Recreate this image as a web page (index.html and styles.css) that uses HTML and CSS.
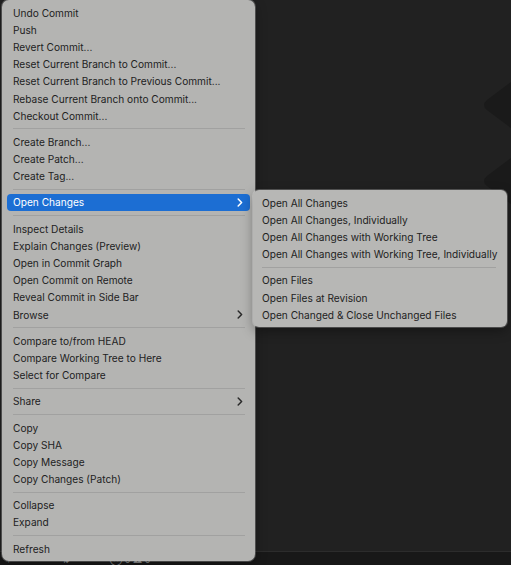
FILE: index.html
```html
<!DOCTYPE html>
<html>
<head>
<meta charset="utf-8">
<link rel="stylesheet" href="styles.css">
</head>
<body>
<div class="editor">
  <svg class="deco" width="30" height="140" viewBox="0 0 30 140">
    <path d="M30 12 L6 30 Q0 35 6 40 L30 58 Z" fill="#1a1a1a"/>
    <path d="M30 88 L6 106 Q0 111 6 116 L30 134 Z" fill="#1a1a1a"/>
  </svg>
  <div class="status">
    <span class="st">⑂ ⁰⁰</span><span class="st">⇅</span><span class="st">⊗ 0 ⚠ 0</span>
  </div>
</div>

<div class="menu main">
  <div class="item">Undo Commit</div>
  <div class="item">Push</div>
  <div class="item">Revert Commit...</div>
  <div class="item">Reset Current Branch to Commit...</div>
  <div class="item">Reset Current Branch to Previous Commit...</div>
  <div class="item">Rebase Current Branch onto Commit...</div>
  <div class="item">Checkout Commit...</div>
  <div class="sep"></div>
  <div class="item">Create Branch...</div>
  <div class="item">Create Patch...</div>
  <div class="item">Create Tag...</div>
  <div class="sep"></div>
  <div class="item active"><span>Open Changes</span><svg class="chev" width="6" height="9" viewBox="0 0 6 9"><path d="M1.2 1 L4.6 4.5 L1.2 8" fill="none" stroke="currentColor" stroke-width="1.5" stroke-linecap="round" stroke-linejoin="round"/></svg></div>
  <div class="sep"></div>
  <div class="item">Inspect Details</div>
  <div class="item">Explain Changes (Preview)</div>
  <div class="item">Open in Commit Graph</div>
  <div class="item">Open Commit on Remote</div>
  <div class="item">Reveal Commit in Side Bar</div>
  <div class="item"><span>Browse</span><svg class="chev" width="6" height="9" viewBox="0 0 6 9"><path d="M1.2 1 L4.6 4.5 L1.2 8" fill="none" stroke="currentColor" stroke-width="1.5" stroke-linecap="round" stroke-linejoin="round"/></svg></div>
  <div class="sep"></div>
  <div class="item">Compare to/from HEAD</div>
  <div class="item">Compare Working Tree to Here</div>
  <div class="item">Select for Compare</div>
  <div class="sep"></div>
  <div class="item"><span>Share</span><svg class="chev" width="6" height="9" viewBox="0 0 6 9"><path d="M1.2 1 L4.6 4.5 L1.2 8" fill="none" stroke="currentColor" stroke-width="1.5" stroke-linecap="round" stroke-linejoin="round"/></svg></div>
  <div class="sep"></div>
  <div class="item">Copy</div>
  <div class="item">Copy SHA</div>
  <div class="item">Copy Message</div>
  <div class="item">Copy Changes (Patch)</div>
  <div class="sep"></div>
  <div class="item">Collapse</div>
  <div class="item">Expand</div>
  <div class="sep"></div>
  <div class="item">Refresh</div>
</div>

<div class="menu sub">
  <div class="item">Open All Changes</div>
  <div class="item">Open All Changes, Individually</div>
  <div class="item">Open All Changes with Working Tree</div>
  <div class="item">Open All Changes with Working Tree, Individually</div>
  <div class="sep"></div>
  <div class="item">Open Files</div>
  <div class="item">Open Files at Revision</div>
  <div class="item">Open Changed &amp; Close Unchanged Files</div>
</div>
</body>
</html>
```

FILE: styles.css
```css
html, body {
  margin: 0;
  padding: 0;
  width: 511px;
  height: 565px;
  overflow: hidden;
  background: #212121;
  font-family: Inter, "Noto Sans", sans-serif;
}

.editor {
  position: relative;
  width: 511px;
  height: 565px;
  display: flex;
  flex-direction: column;
  justify-content: flex-end;
}

.deco {
  position: absolute;
  right: 0;
  top: 70px;
}

.status {
  height: 13px;
  border-top: 1px solid #2c2c2c;
  background: #181818;
  display: flex;
  gap: 40px;
  padding-left: 6px;
  align-items: flex-end;
  font-size: 9px;
  color: #8a8a8a;
  line-height: 10px;
}

.menu {
  position: absolute;
  background: #b4b4b2;
  color: #222222;
  font-size: 10.15px;
  box-shadow: 0 0 0 1px rgba(255, 255, 255, 0.22), 0 4px 12px rgba(0, 0, 0, 0.35);
  box-sizing: border-box;
}

.main {
  left: 2px;
  top: 0;
  width: 253px;
  padding: 4px 0 4px;
  border-radius: 7px;
}

.sub {
  left: 253px;
  top: 190px;
  width: 254px;
  padding: 4px 0 4px;
  border-radius: 6px;
  background: #b7b7b5;
}

.item {
  height: 17.2px;
  display: flex;
  align-items: center;
  justify-content: space-between;
  margin: 0 5px;
  padding: 0 7px 0 6px;
  border-radius: 4px;
  white-space: nowrap;
}

.sub .item {
  margin: 0 4px;
  padding-left: 5px;
}

.item.active {
  background: #1c6ed3;
  color: #ffffff;
}

.chev {
  color: #2a2a2a;
}

.active .chev {
  color: #ffffff;
}

.sep {
  height: 1px;
  margin: 4px 10px 4px 11px;
  background: #a1a1a0;
}

.sub .sep {
  margin: 4px 11px 4px 9px;
}
```
